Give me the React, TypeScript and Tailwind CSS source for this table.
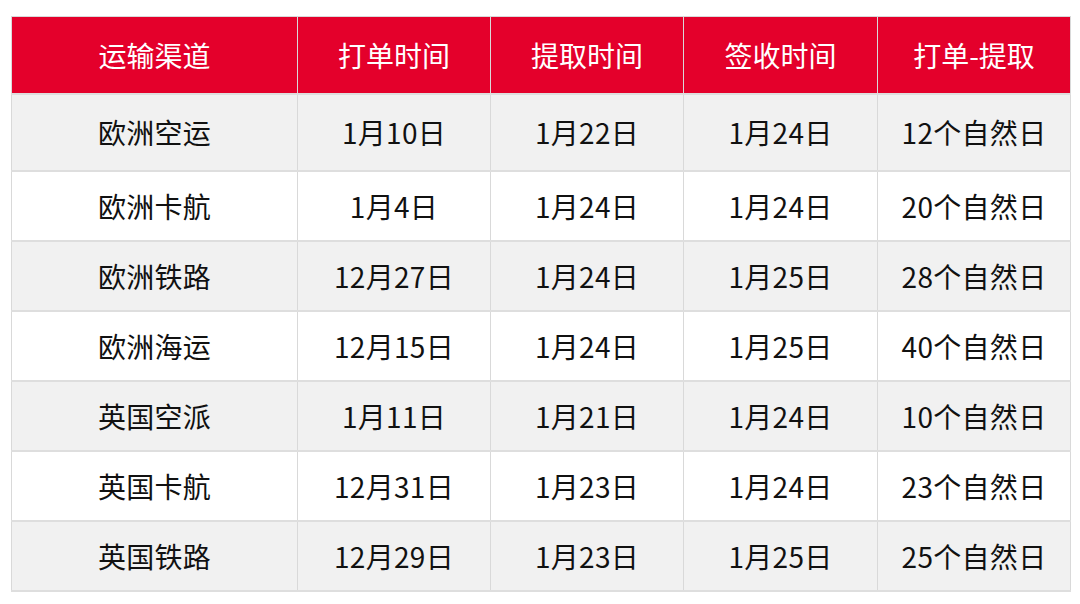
const headers = ['运输渠道', '打单时间', '提取时间', '签收时间', '打单-提取'];

const rows: string[][] = [
  ['欧洲空运', '1月10日', '1月22日', '1月24日', '12个自然日'],
  ['欧洲卡航', '1月4日', '1月24日', '1月24日', '20个自然日'],
  ['欧洲铁路', '12月27日', '1月24日', '1月25日', '28个自然日'],
  ['欧洲海运', '12月15日', '1月24日', '1月25日', '40个自然日'],
  ['英国空派', '1月11日', '1月21日', '1月24日', '10个自然日'],
  ['英国卡航', '12月31日', '1月23日', '1月24日', '23个自然日'],
  ['英国铁路', '12月29日', '1月23日', '1月25日', '25个自然日'],
];

export default function App() {
  return (
    <div className="w-[1080px] h-[604px] bg-white pt-4 pl-[11px] font-['Noto_Sans_CJK_SC','Noto_Sans',sans-serif]">
      <table className="border-collapse table-fixed w-[1059px]">
        <colgroup>
          <col className="w-[286px]" />
          <col className="w-[193px]" />
          <col className="w-[193px]" />
          <col className="w-[194px]" />
          <col className="w-[193px]" />
        </colgroup>
        <thead>
          <tr className="h-[77px] bg-[#e4002b]">
            {headers.map((h) => (
              <th
                key={h}
                className="border border-[#d9d9d9] text-center text-[28px] font-normal text-white p-0"
              >
                {h}
              </th>
            ))}
          </tr>
        </thead>
        <tbody>
          {rows.map((r, i) => (
            <tr
              key={r[0]}
              className={`${i === 0 ? 'h-[77px]' : 'h-[70px]'} ${i % 2 === 0 ? 'bg-[#f1f1f1]' : 'bg-white'}`}
            >
              {r.map((c, j) => (
                <td
                  key={j}
                  className="border-x border-y-2 border-x-[#d9d9d9] border-y-[#dedede] text-center text-[28px] text-[#111] p-0 tracking-[0.3px]"
                >
                  {c}
                </td>
              ))}
            </tr>
          ))}
        </tbody>
      </table>
    </div>
  );
}
